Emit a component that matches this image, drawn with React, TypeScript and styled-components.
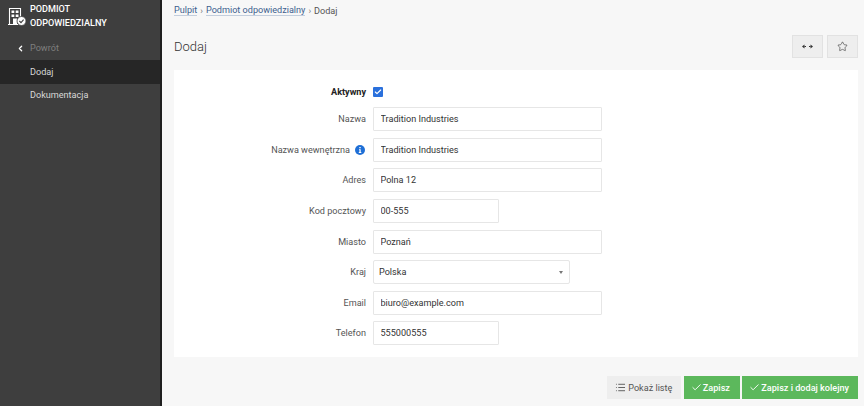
import React from "react";
import styled, { createGlobalStyle } from "styled-components";
import { Check, List, Star, ChevronLeft } from "lucide-react";

const GlobalStyle = createGlobalStyle`
	html, body {
		margin: 0;
		height: 100%;
		overflow: hidden;
		background: #f7f7f7;
		font-family: Roboto, "Liberation Sans", sans-serif;
	}
`;

const Page = styled.div`
	display: flex;
	width: 864px;
	height: 406px;
	overflow: hidden;
`;

const Sidebar = styled.aside`
	flex: 0 0 160px;
	background: #3e3e3e;
	border-right: 2px solid #1f1f1f;
	display: flex;
	flex-direction: column;
`;

const Brand = styled.div`
	display: flex;
	gap: 2px;
	height: 34.5px;
	padding: 2px 0 0 8px;
	align-items: flex-start;
`;

const BrandTitle = styled.div`
	color: #fff;
	font-size: 9.1px;
	font-weight: 500;
	line-height: 14px;
`;

const NavItem = styled.div<{ $active?: boolean; $muted?: boolean }>`
	height: 23.5px;
	display: flex;
	align-items: center;
	padding-left: 30px;
	position: relative;
	font-size: 9.1px;
	color: ${(p) => (p.$muted ? "#7f7f7f" : "#d8d8d8")};
	background: ${(p) => (p.$active ? "#262626" : "transparent")};
`;

const BackIcon = styled.span`
	position: absolute;
	left: 16px;
	top: 7px;
	display: flex;
	color: #fff;
`;

const Main = styled.main`
	flex: 1;
	display: flex;
	flex-direction: column;
	padding: 0 6px 0 12px;
	min-width: 0;
`;

const Breadcrumb = styled.nav`
	height: 20px;
	padding-top: 1px;
	box-sizing: border-box;
	display: flex;
	align-items: center;
	gap: 3px;
	font-size: 9.1px;
	color: #555;
`;

const Crumb = styled.a`
	color: #3d5f8f;
	border-bottom: 1px solid #c3cedd;
	line-height: 10px;
`;

const Sep = styled.span`
	color: #777;
	font-size: 9px;
`;

const Header = styled.header`
	height: 50px;
	padding-top: 3px;
	box-sizing: border-box;
	display: flex;
	align-items: center;
	justify-content: space-between;
`;

const Title = styled.h1`
	margin: 0;
	font-size: 13px;
	font-weight: 300;
	color: #333;
`;

const HeaderActions = styled.div`
	display: flex;
	gap: 4px;
`;

const IconButton = styled.button`
	width: 31px;
	height: 23px;
	padding: 0;
	display: flex;
	align-items: center;
	justify-content: center;
	background: #eeeeee;
	border: 1px solid #e2e2e2;
	color: #333;
`;

const Panel = styled.section`
	background: #fff;
	height: 287px;
	padding-top: 9px;
	box-sizing: border-box;
	display: flex;
	flex-direction: column;
`;

const Row = styled.div<{ $first?: boolean }>`
	display: grid;
	grid-template-columns: 192px 1fr;
	column-gap: 7px;
	align-items: center;
	height: ${(p) => (p.$first ? "25px" : "30.57px")};
`;

const Label = styled.label<{ $bold?: boolean }>`
	display: flex;
	justify-content: flex-end;
	align-items: center;
	gap: 5px;
	font-size: 9.1px;
	color: ${(p) => (p.$bold ? "#222" : "#555")};
	font-weight: ${(p) => (p.$bold ? 700 : 400)};
`;

const InfoMark = styled.svg`
	margin-right: 1px;
`;

const Input = styled.input<{ $short?: boolean }>`
	box-sizing: border-box;
	width: ${(p) => (p.$short ? "126px" : "229px")};
	height: 24px;
	padding: 0 6.5px;
	border: 1px solid #e6e6e6;
	border-radius: 1px;
	background: #fff;
	color: #333;
	font: 400 9.1px Roboto, sans-serif;
	outline: none;
`;

const SelectBox = styled.div`
	box-sizing: border-box;
	width: 197px;
	height: 24px;
	padding: 0 6px 0 5px;
	border: 1px solid #e6e6e6;
	border-radius: 2px;
	display: flex;
	align-items: center;
	justify-content: space-between;
	font-size: 9.1px;
	color: #333;
`;

const Caret = styled.span`
	width: 0;
	height: 0;
	border-left: 2.5px solid transparent;
	border-right: 2.5px solid transparent;
	border-top: 3px solid #777;
`;

const Checkbox = styled.span`
	width: 10px;
	height: 10px;
	background: #2a70dc;
	display: flex;
	align-items: center;
	justify-content: center;
	color: #fff;
	border-radius: 1px;
`;

const Footer = styled.footer`
	display: flex;
	justify-content: flex-end;
	gap: 2.5px;
	padding-top: 19px;
`;

const Button = styled.button<{ $primary?: boolean }>`
	height: 23px;
	padding: 0 8px 0 ${(p) => (p.$primary ? "6px" : "7px")};
	display: flex;
	align-items: center;
	gap: ${(p) => (p.$primary ? "1px" : "2px")};
	border: 1px solid ${(p) => (p.$primary ? "#5cb85c" : "#eeeeee")};
	background: ${(p) => (p.$primary ? "#5cb85c" : "#eeeeee")};
	color: ${(p) => (p.$primary ? "#fff" : "#555")};
	font: ${(p) => (p.$primary ? 500 : 400)} 9.1px Roboto, sans-serif;
`;

const SaveButton = styled(Button)`
	min-width: 56px;
`;

const fields = [
	{ label: "Nazwa", value: "Tradition Industries" },
	{ label: "Nazwa wewnętrzna", value: "Tradition Industries", info: true },
	{ label: "Adres", value: "Polna 12" },
	{ label: "Kod pocztowy", value: "00-555", short: true },
	{ label: "Miasto", value: "Poznań" },
	{ label: "Kraj", value: "Polska", select: true },
	{ label: "Email", value: "biuro@example.com" },
	{ label: "Telefon", value: "555000555", short: true },
];

function BuildingIcon() {
	return (
		<svg width="20" height="24" viewBox="0 0 20 24" fill="none">
			<path d="M1.5 22V6.500h11V16M0 22.500h10" stroke="#fff" strokeWidth="1.100" />
			<path d="M3.500 8.500h2.800v2.600H3.500zM7.700 8.500h2.800v2.600H7.700zM3.500 12.400h2.800V15H3.500zM7.700 12.400h2.800V15H7.700zM5 22v-5.500h4V22z" fill="#fff" />
			<circle cx="13.500" cy="19" r="4.500" fill="#fff" stroke="#3e3e3e" strokeWidth="0.800" />
			<path d="M11.400 19l1.600 1.700 2.600-3" stroke="#3e3e3e" strokeWidth="1.100" />
		</svg>
	);
}

function ArrowsIcon() {
	return (
		<svg width="11" height="5" viewBox="0 0 11 5" fill="#333">
			<path d="M0 2.500l2.500-2v4zM11 2.500l-2.500-2v4z" />
			<path d="M2.500 2.100h1.500v.8H2.500zM7 2.100h1.500v.8H7z" />
		</svg>
	);
}

function InfoIcon() {
	return (
		<InfoMark width="10" height="10" viewBox="0 0 10 10">
			<circle cx="5" cy="5" r="5" fill="#1f6fd6" />
			<path d="M4.300 2h1.400v1.300H4.300zM4 4.200h1.700v2.800h.6v.9H3.800V7h.6V5.100H4z" fill="#fff" />
		</InfoMark>
	);
}

export default function App() {
	return (
		<Page>
			<GlobalStyle />
			<Sidebar>
				<Brand>
					<BuildingIcon />
					<BrandTitle>
						PODMIOT
						<br />
						ODPOWIEDZIALNY
					</BrandTitle>
				</Brand>
				<NavItem $muted>
					<BackIcon>
						<ChevronLeft size={9} strokeWidth={3.5} />
					</BackIcon>
					Powrót
				</NavItem>
				<NavItem $active>Dodaj</NavItem>
				<NavItem>Dokumentacja</NavItem>
			</Sidebar>
			<Main>
				<Breadcrumb>
					<Crumb>Pulpit</Crumb>
					<Sep>›</Sep>
					<Crumb>Podmiot odpowiedzialny</Crumb>
					<Sep>›</Sep>
					<span>Dodaj</span>
				</Breadcrumb>
				<Header>
					<Title>Dodaj</Title>
					<HeaderActions>
						<IconButton>
							<ArrowsIcon />
						</IconButton>
						<IconButton>
							<Star size={11} strokeWidth={1.3} />
						</IconButton>
					</HeaderActions>
				</Header>
				<Panel>
					<Row $first>
						<Label $bold>Aktywny</Label>
						<Checkbox>
							<Check size={8} strokeWidth={3.5} />
						</Checkbox>
					</Row>
					{fields.map((f) => (
						<Row key={f.label}>
							<Label>
								{f.label}
								{f.info && <InfoIcon />}
							</Label>
							{f.select ? (
								<SelectBox>
									{f.value}
									<Caret />
								</SelectBox>
							) : (
								<Input $short={f.short} defaultValue={f.value} />
							)}
						</Row>
					))}
				</Panel>
				<Footer>
					<Button>
						<List size={11} />
						Pokaż listę
					</Button>
					<SaveButton $primary>
						<Check size={11} />
						Zapisz
					</SaveButton>
					<Button $primary>
						<Check size={11} />
						Zapisz i dodaj kolejny
					</Button>
				</Footer>
			</Main>
		</Page>
	);
}
